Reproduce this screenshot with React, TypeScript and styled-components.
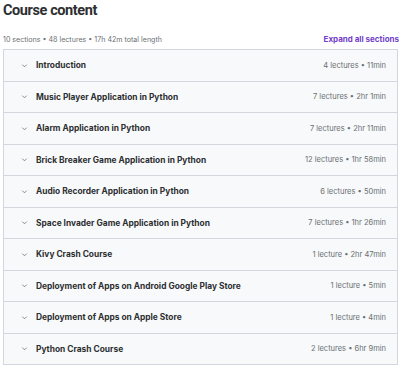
import React from "react";
import styled, { createGlobalStyle } from "styled-components";

const GlobalStyle = createGlobalStyle`
  body {
    margin: 0;
    background: #ffffff;
    font-family: Inter, "Liberation Sans", sans-serif;
    color: #2d2f31;
  }
`;

const Page = styled.div`
  padding: 1px 1px 0 3px;
`;

const Title = styled.h2`
  margin: 0;
  font-family: Roboto, "Liberation Sans", sans-serif;
  font-size: 14.5px;
  font-weight: 700;
  line-height: 20px;
  letter-spacing: -0.4px;
`;

const SummaryRow = styled.div`
  display: flex;
  justify-content: space-between;
  align-items: center;
  margin-top: 11px;
  height: 14px;
`;

const Summary = styled.span`
  font-size: 7.1px;
  color: #6a6f73;
`;

const ExpandLink = styled.button`
  border: none;
  background: none;
  padding: 0;
  font-family: inherit;
  font-size: 8px;
  font-weight: 700;
  color: #7340c9;
  cursor: pointer;
`;

const Sections = styled.div`
  margin-top: 3px;
  margin-right: 1px;
  border: 1px solid #d1d7dc;
  border-bottom: none;
`;

const Row = styled.div`
  display: flex;
  align-items: center;
  height: 30.5px;
  padding: 0 11px 0 17px;
  background: #f7f9fa;
  border-bottom: 1px solid #d1d7dc;
`;

const Chevron = styled.svg`
  width: 7px;
  height: 7px;
  margin-right: 8px;
  flex-shrink: 0;
`;

const SectionTitle = styled.span`
  flex: 1;
  font-size: 8.4px;
  font-weight: 700;
  color: #2d2f31;
`;

const Meta = styled.span`
  font-size: 7.5px;
  color: #6a6f73;
`;

const sections = [
  ["Introduction", "4 lectures • 11min"],
  ["Music Player Application in Python", "7 lectures • 2hr 1min"],
  ["Alarm Application in Python", "7 lectures • 2hr 11min"],
  ["Brick Breaker Game Application in Python", "12 lectures • 1hr 58min"],
  ["Audio Recorder Application in Python", "6 lectures • 50min"],
  ["Space Invader Game Application in Python", "7 lectures • 1hr 26min"],
  ["Kivy Crash Course", "1 lecture • 2hr 47min"],
  ["Deployment of Apps on Android Google Play Store", "1 lecture • 5min"],
  ["Deployment of Apps on Apple Store", "1 lecture • 4min"],
  ["Python Crash Course", "2 lectures • 6hr 9min"],
];

const App = () => {
  return (
    <Page>
      <GlobalStyle />
      <Title>Course content</Title>
      <SummaryRow>
        <Summary>10 sections • 48 lectures • 17h 42m total length</Summary>
        <ExpandLink>Expand all sections</ExpandLink>
      </SummaryRow>
      <Sections>
        {sections.map(([name, meta]) => (
          <Row key={name}>
            <Chevron viewBox="0 0 8 8">
              <path d="M1.5 3 L4 5.5 L6.5 3" fill="none" stroke="#6a6f73" strokeWidth="0.9" />
            </Chevron>
            <SectionTitle>{name}</SectionTitle>
            <Meta>{meta}</Meta>
          </Row>
        ))}
      </Sections>
    </Page>
  );
};

export default App;
